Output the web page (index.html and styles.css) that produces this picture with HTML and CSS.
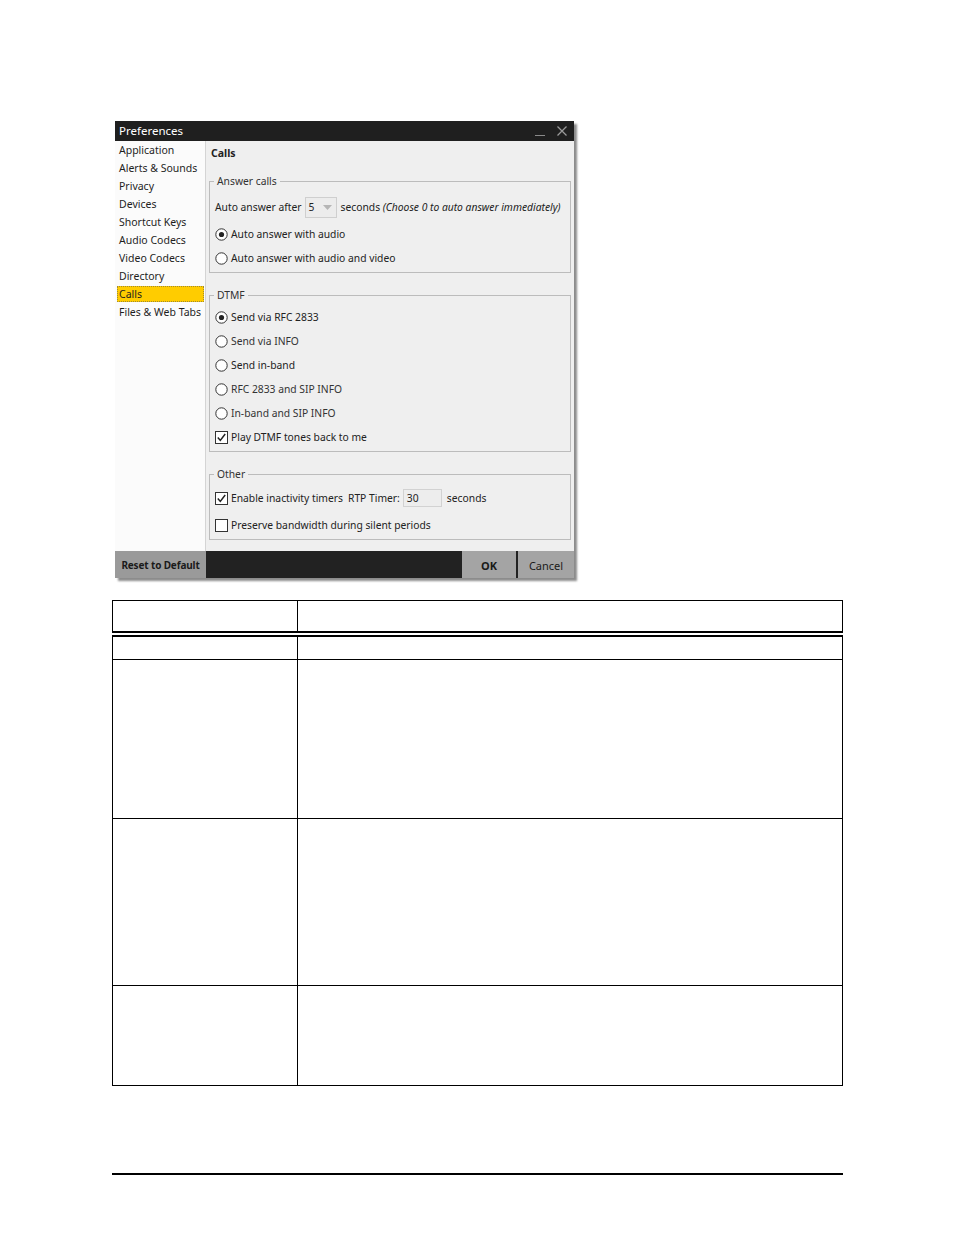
FILE: index.html
```html
<!DOCTYPE html>
<html>
<head>
<meta charset="utf-8">
<link rel="stylesheet" href="styles.css">
</head>
<body>
<div class="page">
  <div class="dialog">
    <div class="titlebar">
      <span class="title">Preferences</span>
      <span class="controls">
        <svg class="min" width="12" height="12" viewBox="0 0 12 12"><path d="M1 10.5H11" stroke="#8a8a8a" stroke-width="1"/></svg>
        <svg class="close" width="12" height="12" viewBox="0 0 12 12"><path d="M1.5 1.5L10.5 10.5M10.5 1.5L1.5 10.5" stroke="#9a9a9a" stroke-width="1.3"/></svg>
      </span>
    </div>
    <div class="dbody">
      <ul class="sidebar">
        <li><span>Application</span></li>
        <li><span>Alerts &amp; Sounds</span></li>
        <li><span>Privacy</span></li>
        <li><span>Devices</span></li>
        <li><span>Shortcut Keys</span></li>
        <li><span>Audio Codecs</span></li>
        <li><span>Video Codecs</span></li>
        <li><span>Directory</span></li>
        <li class="active"><span>Calls</span></li>
        <li><span>Files &amp; Web Tabs</span></li>
      </ul>
      <div class="panel">
        <div class="heading">Calls</div>
        <fieldset class="group g-answer">
          <legend>Answer calls</legend>
          <div class="row">
            <span>Auto answer after</span>
            <span class="combo"><span>5</span><svg width="9" height="5" viewBox="0 0 9 5"><path d="M0 0H9L4.5 5Z" fill="#b5b5b5"/></svg></span>
            <span>seconds <i>(Choose 0 to auto answer immediately)</i></span>
          </div>
          <div class="row gap"><svg class="radio" width="13" height="13" viewBox="0 0 13 13"><circle cx="6.5" cy="6.5" r="5.7" fill="#fff" stroke="#333" stroke-width="1"/><circle cx="6.5" cy="6.5" r="2.6" fill="#222"/></svg><span>Auto answer with audio</span></div>
          <div class="row"><svg class="radio" width="13" height="13" viewBox="0 0 13 13"><circle cx="6.5" cy="6.5" r="5.7" fill="#fff" stroke="#333" stroke-width="1"/></svg><span>Auto answer with audio and video</span></div>
        </fieldset>
        <fieldset class="group g-dtmf">
          <legend>DTMF</legend>
          <div class="row"><svg class="radio" width="13" height="13" viewBox="0 0 13 13"><circle cx="6.5" cy="6.5" r="5.7" fill="#fff" stroke="#333" stroke-width="1"/><circle cx="6.5" cy="6.5" r="2.6" fill="#222"/></svg><span>Send via RFC 2833</span></div>
          <div class="row"><svg class="radio" width="13" height="13" viewBox="0 0 13 13"><circle cx="6.5" cy="6.5" r="5.7" fill="#fff" stroke="#333" stroke-width="1"/></svg><span class="dim">Send via INFO</span></div>
          <div class="row"><svg class="radio" width="13" height="13" viewBox="0 0 13 13"><circle cx="6.5" cy="6.5" r="5.7" fill="#fff" stroke="#333" stroke-width="1"/></svg><span>Send in-band</span></div>
          <div class="row"><svg class="radio" width="13" height="13" viewBox="0 0 13 13"><circle cx="6.5" cy="6.5" r="5.7" fill="#fff" stroke="#333" stroke-width="1"/></svg><span class="dim">RFC 2833 and SIP INFO</span></div>
          <div class="row"><svg class="radio" width="13" height="13" viewBox="0 0 13 13"><circle cx="6.5" cy="6.5" r="5.7" fill="#fff" stroke="#333" stroke-width="1"/></svg><span class="dim">In-band and SIP INFO</span></div>
          <div class="row"><svg class="check" width="13" height="13" viewBox="0 0 13 13"><rect x="0.5" y="0.5" width="12" height="12" fill="#fff" stroke="#333" stroke-width="1"/><path d="M2.8 6.6L5.3 9.4L10.2 3" fill="none" stroke="#222" stroke-width="1.5"/></svg><span>Play DTMF tones back to me</span></div>
        </fieldset>
        <fieldset class="group g-other">
          <legend>Other</legend>
          <div class="row"><svg class="check" width="13" height="13" viewBox="0 0 13 13"><rect x="0.5" y="0.5" width="12" height="12" fill="#fff" stroke="#333" stroke-width="1"/><path d="M2.8 6.6L5.3 9.4L10.2 3" fill="none" stroke="#222" stroke-width="1.5"/></svg><span>Enable inactivity timers</span><span class="rtp">RTP Timer:</span><span class="input">30</span><span class="secs">seconds</span></div>
          <div class="row gap"><svg class="check" width="13" height="13" viewBox="0 0 13 13"><rect x="0.5" y="0.5" width="12" height="12" fill="#fff" stroke="#333" stroke-width="1"/></svg><span>Preserve bandwidth during silent periods</span></div>
        </fieldset>
      </div>
    </div>
    <div class="dfooter">
      <span class="btn reset">Reset to Default</span>
      <span class="spacer"></span>
      <span class="btn ok">OK</span>
      <span class="btn cancel">Cancel</span>
    </div>
  </div>

  <table class="doc">
    <tr class="hdr"><td class="c1"></td><td></td></tr>
    <tr class="r1"><td class="c1"></td><td></td></tr>
    <tr class="r2"><td class="c1"></td><td></td></tr>
    <tr class="r3"><td class="c1"></td><td></td></tr>
    <tr class="r4"><td class="c1"></td><td></td></tr>
  </table>

  <div class="rule"></div>
</div>
</body>
</html>
```
FILE: styles.css
```css
* { box-sizing: border-box; }
html, body { margin: 0; padding: 0; background: #fff; }
.page { padding-top: 121px; height: 1235px; font-family: "Noto Sans", "Open Sans", sans-serif; }

.dialog {
  margin-left: 115px;
  width: 459px;
  box-shadow: 3px 3px 2px rgba(0,0,0,0.45);
  font-size: 10.3px;
  color: #222;
}
.titlebar {
  height: 20px;
  background: #1f1f1f;
  color: #fff;
  display: flex;
  align-items: center;
  justify-content: space-between;
  padding: 0 6px 0 4px;
}
.title { font-size: 11.5px; line-height: 20px; }
.controls { display: flex; gap: 10px; align-items: center; }
.controls svg { display: block; }

.dbody { display: flex; height: 410px; }
.sidebar {
  list-style: none;
  margin: 0;
  padding: 0;
  width: 91px;
  flex: none;
  background: #fbfbfb;
  border-right: 1px solid #d4d4d4;
  font-size: 10.5px;
}
.sidebar li {
  height: 18px;
  padding: 1px 1px 1px 2px;
  white-space: nowrap;
  color: #1e1e1e;
}
.sidebar li span {
  display: block;
  height: 16px;
  line-height: 16px;
  padding-left: 2px;
}
.sidebar li.active span {
  background: #ffcc00;
  outline: 1px dotted #a08a30;
  outline-offset: -1px;
}

.panel {
  flex: 1;
  min-width: 0;
  background: #efefef;
  padding: 5px 3px 0 3px;
}
.heading { font-weight: bold; height: 14px; line-height: 14px; margin: 0 0 14px 2px; font-size: 10.5px; }

.group {
  margin: 0 0 15px 0;
  border: 1px solid #bcbcbc;
  padding: 0 5px 2px 5px;
  min-width: 0;
}
.group legend {
  padding: 0 3px;
  margin-left: -1px;
  line-height: 14px;
  height: 14px;
  color: #333;
}
.row {
  height: 24px;
  display: flex;
  align-items: center;
  white-space: nowrap;
}
.row.gap { margin-top: 3px; }
.g-answer { padding-top: 7px; }
.g-dtmf { padding-top: 3px; }
.g-other { padding-top: 5px; }
.radio, .check { display: block; flex: none; margin-right: 3px; }
.dim { color: #333; }

.combo {
  width: 32px;
  height: 21px;
  margin: 0 4px 0 3px;
  border: 1px solid #cfcfcf;
  background: #ececec;
  display: flex;
  align-items: center;
  justify-content: space-between;
  padding: 0 4px 0 3px;
}
.combo svg { display: block; }
i { font-style: italic; }

.rtp { margin-left: 5px; }
.input {
  width: 39px;
  height: 18px;
  margin-left: 3px;
  border: 1px solid #d2d2d2;
  background: #ededed;
  padding-left: 3px;
  line-height: 16px;
}
.secs { margin-left: 5px; }

.dfooter {
  height: 27px;
  background: #222;
  display: flex;
  align-items: stretch;
}
.btn {
  display: flex;
  align-items: center;
  justify-content: center;
  color: #1a1a1a;
  font-size: 11px;
  padding-top: 1px;
}
.reset { width: 91px; background: #9a9a9a; font-weight: bold; font-size: 10px; letter-spacing: -0.15px; }
.spacer { flex: 1; }
.ok { width: 54px; background: #a4a4a4; font-weight: bold; margin-right: 2px; }
.cancel { width: 56px; background: #a4a4a4; }

.doc {
  margin: 22px 0 0 112px;
  width: 731px;
  border-collapse: collapse;
  table-layout: fixed;
}
.doc td { border: 1.5px solid #000; padding: 0; }
.doc td.c1 { width: 185px; }
.hdr td { height: 33px; border-bottom: 6px double #000; }
.r1 td { height: 26px; }
.r2 td { height: 159px; }
.r3 td { height: 167px; }
.r4 td { height: 100px; }

.rule {
  margin: 87px 0 0 112px;
  width: 731px;
  height: 1.5px;
  background: #000;
}
```
